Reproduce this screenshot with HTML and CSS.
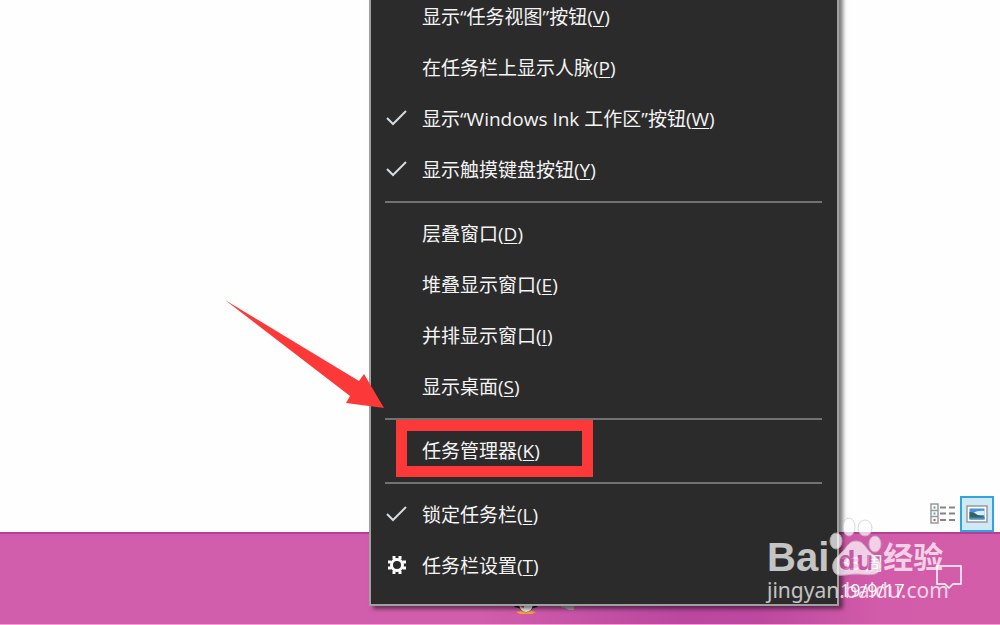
FILE: index.html
```html
<!DOCTYPE html>
<html lang="zh-CN">
<head>
<meta charset="utf-8">
<title>任务栏</title>
<link rel="stylesheet" href="styles.css">
</head>
<body>
<div class="desktop">
  <main class="window">
    <div class="view-switch">
      <button class="view-button" type="button" aria-label="详细信息">
        <svg class="view-icon" width="26" height="22" viewBox="0 0 26 22">
          <path d="M1 1h7v19H1zM1 7.500h7M1 13.500h7" fill="#fff" stroke="#9a9a9a" stroke-width="1.500"/>
          <path d="M10 4.500h6M19 4.500h6M10 10.500h6M19 10.500h6M10 17h6M19 17h6" stroke="#858585" stroke-width="2"/>
          <path d="M3.500 4.500h2" stroke="#64a070" stroke-width="2"/>
          <path d="M3.500 10.500h2" stroke="#4d9de0" stroke-width="2"/>
          <path d="M3.500 17h2" stroke="#e04848" stroke-width="2"/>
        </svg>
      </button>
      <button class="view-button selected" type="button" aria-label="大图标">
        <svg class="view-icon" width="22" height="18" viewBox="0 0 22 18">
          <path d="M1 1h20v16H1z" fill="#fff" stroke="#9b9b9b" stroke-width="1.500"/>
          <path d="M3.500 3.500h15v11h-15z" fill="#4b93dd"/>
          <path d="M7 8q5-3 11.500-2v4H9z" fill="#d8edfa"/>
          <path d="M3.500 7q5 0 8 3l7 2v1h-15z" fill="#31645a"/>
          <path d="M3.500 12.500h15v2h-15z" fill="#4a8fc9"/>
        </svg>
      </button>
    </div>
  </main>
  <footer class="taskbar">
    <svg class="app-icon penguin" width="24" height="12" viewBox="0 0 24 12">
      <path d="M0 3l4-3h16l4 3-5 1q-7 8-14 0z" fill="#161616"/>
      <path d="M5 0h14q-1 8-7 8T5 0z" fill="#eee"/>
      <path d="M2 8l5-1q5 3 10 0l5 1-4 2H6z" fill="#f5a623"/>
      <path d="M7 2l3 1" stroke="#d44" stroke-width="2"/>
    </svg>
    <svg class="app-icon" width="22" height="12" viewBox="0 0 22 12">
      <path d="M0 0h10l2 3H3z" fill="#7b8b5c"/>
      <path d="M8 0h13v6h-5q-4-3-8-3z" fill="#a9a9a9"/>
    </svg>
    <div class="clock"><span>33 周</span><span>19/9/17</span></div>
    <button class="notify" type="button" aria-label="操作中心">
      <svg width="26" height="26" viewBox="0 0 26 26"><path d="M1 1h24v18h-8l-4 4-4-4H1z" fill="none" stroke="#fff" stroke-width="1.500"/></svg>
    </button>
  </footer>

  <nav class="menu" aria-label="任务栏菜单">
    <button class="item" type="button"><span class="mark"></span><span>显示“任务视图”按钮(<u>V</u>)</span></button>
    <button class="item" type="button"><span class="mark"></span><span>在任务栏上显示人脉(<u>P</u>)</span></button>
    <button class="item" type="button"><span class="mark"><svg width="22" height="18" viewBox="0 0 22 18"><path class="tick" d="M1 9l6 6L20 2"/></svg></span><span>显示“Windows Ink 工作区”按钮(<u>W</u>)</span></button>
    <button class="item" type="button"><span class="mark"><svg width="22" height="18" viewBox="0 0 22 18"><path class="tick" d="M1 9l6 6L20 2"/></svg></span><span>显示触摸键盘按钮(<u>Y</u>)</span></button>
    <hr class="rule">
    <button class="item" type="button"><span class="mark"></span><span>层叠窗口(<u>D</u>)</span></button>
    <button class="item" type="button"><span class="mark"></span><span>堆叠显示窗口(<u>E</u>)</span></button>
    <button class="item" type="button"><span class="mark"></span><span>并排显示窗口(<u>I</u>)</span></button>
    <button class="item" type="button"><span class="mark"></span><span>显示桌面(<u>S</u>)</span></button>
    <hr class="rule">
    <button class="item" type="button"><span class="mark"></span><span>任务管理器(<u>K</u>)</span><span class="highlight"></span></button>
    <hr class="rule">
    <button class="item" type="button"><span class="mark"><svg width="22" height="18" viewBox="0 0 22 18"><path class="tick" d="M1 9l6 6L20 2"/></svg></span><span>锁定任务栏(<u>L</u>)</span></button>
    <button class="item" type="button"><span class="mark"><svg width="22" height="20" viewBox="-11 -10 22 20"><circle r="5.500" fill="none" stroke="#fff" stroke-width="3"/><path d="M-3-6V-9M3-6V-9M-3 6V9M3 6V9M-6-3H-9M-6 3H-9M6-3H9M6 3H9" stroke="#fff" stroke-width="3"/></svg></span><span>任务栏设置(<u>T</u>)</span></button>
  </nav>

  <svg class="arrow" width="160" height="110" viewBox="0 0 160 110"><path d="M0 0L134 81l5-7 20 34-38-5 4-7z" fill="#fd3838"/></svg>

  <div class="watermark">
    <div class="brand">
      <span class="brand-latin">Bai</span>
      <svg class="paw" width="54" height="60" viewBox="0 0 54 60">
        <ellipse class="pad" cx="7" cy="24" rx="6" ry="8"/>
        <ellipse class="pad" cx="20" cy="10" rx="6" ry="9"/>
        <ellipse class="pad" cx="36" cy="11" rx="7" ry="8"/>
        <ellipse class="pad" cx="46" cy="27" rx="6" ry="8"/>
        <path class="pad" d="M27 24c8 0 10 8 15 12 7 5 12 10 9 17-4 7-14 4-24 4s-18 4-22-2c-4-8 1-14 7-19 5-4 7-12 15-12z"/>
        <text class="paw-text" x="27" y="53" text-anchor="middle">du</text>
      </svg>
      <span class="brand-han">经验</span>
    </div>
    <div class="site">jingyan.baidu.com</div>
  </div>
</div>
</body>
</html>
```
FILE: styles.css
```css
* { box-sizing: border-box; }
body {
  margin: 0;
  background: #fefefe;
  font-family: "Open Sans", "Noto Sans CJK SC", sans-serif;
}
button {
  border: 0;
  padding: 0;
  background: none;
  color: inherit;
  font: inherit;
}
.desktop {
  position: relative;
  display: flex;
  flex-direction: column;
  height: 100vh;
  overflow: hidden;
}
.window {
  flex: 1;
  display: flex;
  align-items: flex-end;
  justify-content: flex-end;
  padding: 0 6px 0 0;
}
.view-switch { display: flex; }
.view-button {
  display: grid;
  place-items: center;
  width: 34px;
  height: 36px;
}
.selected {
  border: 2px solid #2ea5dc;
  background: #cfe9f7;
}
.taskbar {
  position: relative;
  display: flex;
  justify-content: flex-end;
  height: 93px;
  padding: 17px 38px 0 0;
  border-top: 2px solid #b43f9b;
  border-bottom: 1px solid #f3a0d4;
  background: linear-gradient(90deg, #d15eac 0%, #d15eac 48%, #bb479f 68%, #bd489f 76%, #d25ca9 88%, #d45da9 100%);
  color: #fff;
}
.app-icon {
  position: absolute;
  left: 553px;
  bottom: 8px;
}
.penguin { left: 514px; }
.clock {
  display: flex;
  flex-direction: column;
  gap: 3px;
  width: 96px;
  font-size: 18px;
  line-height: 24px;
}
.notify {
  align-self: flex-start;
  height: 26px;
  margin-top: 14px;
}
.menu {
  position: absolute;
  top: -8px;
  left: 369px;
  width: 470px;
  padding-bottom: 12px;
  border: 2px solid #a0a0a0;
  border-top: 0;
  background: #2b2b2b;
  box-shadow: 4px 3px 4px rgba(0, 0, 0, 0.5);
  color: #f4f4f4;
  font-size: 19px;
}
.item {
  position: relative;
  display: flex;
  align-items: center;
  width: 100%;
  height: 51px;
  padding: 0 0 4px 15px;
  white-space: nowrap;
}
.mark {
  display: grid;
  width: 36px;
}
.tick {
  fill: none;
  stroke: #d4dade;
  stroke-width: 2;
}
.item u {
  text-decoration-thickness: 1px;
  text-underline-offset: 2px;
}
.rule {
  height: 2px;
  margin: 5px 15px 6px 14px;
  border: 0;
  background: #727272;
}
.highlight {
  position: absolute;
  top: -6px;
  left: 25px;
  width: 197px;
  height: 57px;
  border: 11px solid #fd3838;
}
.arrow {
  position: absolute;
  top: 300px;
  left: 225px;
}
.watermark {
  position: absolute;
  top: 517px;
  left: 767px;
  color: #fff;
  opacity: 0.72;
  font-family: "Noto Sans", "Noto Sans CJK SC", sans-serif;
}
.brand {
  display: flex;
  align-items: flex-end;
  height: 60px;
}
.brand-latin {
  font: bold 40px/40px "Liberation Sans", sans-serif;
}
.pad {
  fill: #fff;
  stroke: #ccc;
  stroke-width: 1;
}
.paw-text {
  fill: #c25aa6;
  font: bold 27px "Open Sans", sans-serif;
}
.brand-han {
  font-size: 30px;
  font-weight: bold;
  line-height: 40px;
}
.site {
  font-size: 21px;
  line-height: 26px;
}
```
